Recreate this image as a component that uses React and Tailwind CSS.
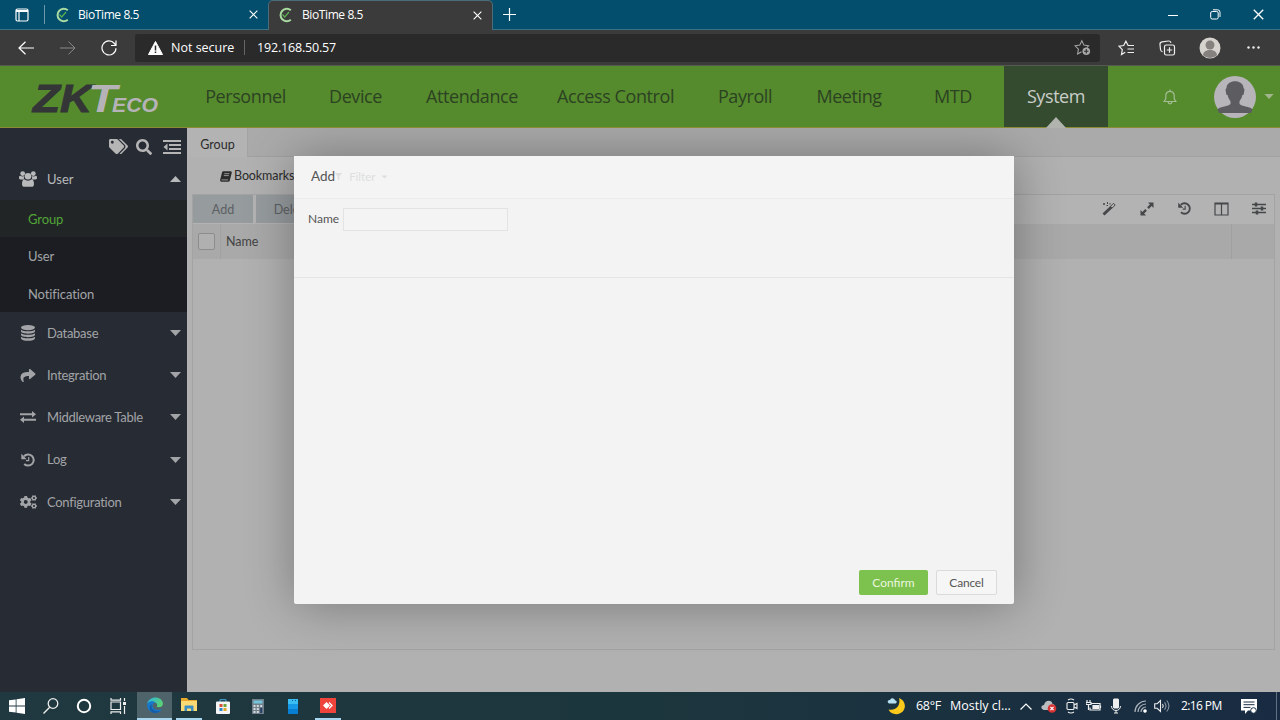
import React from 'react';
import { FaTags, FaSearch, FaShare, FaCogs, FaFilter, FaCaretDown } from 'react-icons/fa';

const navItems = [
  { label: 'Personnel', width: 'w-[117px]' },
  { label: 'Device', width: 'w-[103px]' },
  { label: 'Attendance', width: 'w-[130px]' },
  { label: 'Access Control', width: 'w-[157px]' },
  { label: 'Payroll', width: 'w-[102px]' },
  { label: 'Meeting', width: 'w-[106px]' },
  { label: 'MTD', width: 'w-[102px]' },
];

const ExchangeIcon = () => (
  <svg viewBox="0 0 16 12" className="w-4 h-3" fill="currentColor">
    <path d="M0 2.200h12V0L16 3.200l-4 3.200V4.200H0zM16 7.800H4V5.600L0 8.800 4 12V9.800H16z" />
  </svg>
);

const HistoryIcon = ({ className }) => (
  <svg viewBox="0 0 14 14" className={className} fill="none" stroke="currentColor">
    <path d="M3 3.200A5.600 5.600 0 1 1 3.200 11" strokeWidth="2" />
    <path d="M.3.800v5.400h5.400z" fill="currentColor" stroke="none" />
    <path d="M7.700 4v3.700H5" strokeWidth="1.200" />
  </svg>
);

const DatabaseIcon = () => (
  <svg viewBox="0 0 14 16" className="w-[14px] h-4" fill="currentColor">
    <ellipse cx="7" cy="2.600" rx="7" ry="2.600" />
    <path d="M0 4.700c2.500 2.200 11.500 2.200 14 0v1.600c0 3.200-14 3.200-14 0z" />
    <path d="M0 8.200c2.500 2.200 11.500 2.200 14 0v1.600c0 3.200-14 3.200-14 0z" />
    <path d="M0 11.700c2.500 2.200 11.500 2.200 14 0v1.600c0 3.400-14 3.400-14 0z" />
  </svg>
);

const UsersIcon = () => (
  <svg viewBox="0 0 18 16" className="w-[18px] h-4 ml-[19px]" fill="currentColor">
    <circle cx="3.700" cy="2.600" r="2.400" />
    <circle cx="14.300" cy="2.600" r="2.400" />
    <path d="M5 8.500H1.500C.3 8.500 0 7.700 0 6.800c0-1.500.5-2.400 1.300-2.100 1.200.9 3 1 4 .3-.6 1.300-.4 2.400-.3 3.500zM13 8.500h3.500c1.200 0 1.500-.8 1.500-1.700 0-1.500-.5-2.400-1.300-2.100-1.200.9-3 1-4 .3.600 1.300.4 2.400.3 3.500z" />
    <circle cx="9" cy="5.300" r="3.300" />
    <path d="M5.300 8.300c2 1.800 5.400 1.800 7.400 0 1.600 0 2.300 2.300 2.300 4.900 0 1.700-1 2.600-2.500 2.600h-7C4 15.800 3 14.900 3 13.200c0-2.600.7-4.900 2.300-4.900z" />
  </svg>
);

const OutdentIcon = () => (
  <svg viewBox="0 0 18 14" className="w-[18px] h-[14px]" fill="currentColor">
    <path d="M0 0h18v2H0zM6 4h12v2H6zM6 8h12v2H6zM0 12h18v2H0zM4.500 3.500v7L.5 7z" />
  </svg>
);

const BookIcon = () => (
  <svg viewBox="0 0 12 11" className="w-3 h-[11px] mr-[2px]" fill="currentColor">
    <path d="M3.500.300h6.800c1.100 0 1.700.7 1.400 1.700L9.800 9.500c-.2.800-.7 1.200-1.500 1.200H1.500C.4 10.700-.1 9.800.2 8.800L2 1.500C2.200.700 2.800.300 3.500.300z" />
    <path d="M4.300 2.700h5M3.800 4.600h5M1.500 8.900h6.600" stroke="#b1b1b1" strokeWidth=".8" />
  </svg>
);

const menuItems = [
  { label: 'Database', icon: <DatabaseIcon /> },
  { label: 'Integration', icon: <FaShare className="w-4 h-[15px]" /> },
  { label: 'Middleware Table', icon: <ExchangeIcon /> },
  { label: 'Log', icon: <HistoryIcon className="w-[14px] h-[14px]" /> },
  { label: 'Configuration', icon: <FaCogs className="w-[17px] h-4" /> },
];

const Triangle = ({ up, className }) => (
  <svg viewBox="0 0 11 6" className={className} fill="currentColor">
    <path d={up ? 'M0 6 5.500 0 11 6z' : 'M0 0h11L5.500 6z'} />
  </svg>
);

const BioLogo = () => (
  <svg viewBox="0 0 14 16" className="w-[14px] h-4" fill="none">
    <path d="M12.800 3.300A6.200 6.200 0 1 0 12.800 12.700" stroke="#a9dba0" strokeWidth="2" />
    <path d="M4.500 7.500 6.700 10 11 5" stroke="#5cae52" strokeWidth="1.200" />
  </svg>
);

const CloseIcon = ({ className }) => (
  <svg viewBox="0 0 10 10" className={className} stroke="currentColor" strokeWidth="1.200">
    <path d="M.7.700l8.600 8.600M9.300.700.7 9.300" />
  </svg>
);

const TabStrip = () => (
  <div className="h-[30px] bg-[#034d6d] flex items-stretch text-white text-[12px]">
    <div className="w-[44px] flex items-center justify-center border-b border-[#3a7288]">
      <svg viewBox="0 0 14 14" className="w-[14px] h-[14px]" fill="none" stroke="#fff" strokeWidth="1.200">
        <rect x="1" y="1" width="12" height="12" rx="1.500" />
        <path d="M1 3h12" strokeWidth="2" />
        <path d="M4 3v10" />
      </svg>
    </div>
    <div className="w-[224px] pr-[10px] flex items-center border-b border-[#3a7288]">
      <div className="w-px h-[19px] bg-[#6d98ab] mr-[10px]" />
      <BioLogo />
      <span className="ml-[9px] flex-1 tracking-[-0.4px]">BioTime 8.5</span>
      <CloseIcon className="w-[9px] h-[9px]" />
    </div>
    <div className="w-[225px] pl-[9px] pr-[10px] pb-px flex items-center bg-[#3b3b3b] rounded-t-[5px] border-t border-x border-[#4c6c79]">
      <BioLogo />
      <span className="ml-[10px] flex-1 tracking-[-0.4px]">BioTime 8.5</span>
      <CloseIcon className="w-[9px] h-[9px]" />
    </div>
    <div className="flex-1 pl-[10px] flex items-center border-b border-[#3a7288]">
      <svg viewBox="0 0 13 13" className="w-[13px] h-[13px]" stroke="#fff" strokeWidth="1.200">
        <path d="M6.500 0v13M0 6.500h13" />
      </svg>
      <div className="ml-auto flex items-center mr-[16px]">
        <svg viewBox="0 0 10 10" className="w-[10px] h-[10px] mr-[32px]" stroke="#fff"><path d="M0 5.500h10" /></svg>
        <svg viewBox="0 0 11 11" className="w-[11px] h-[11px] mr-[32px]" fill="none" stroke="#fff">
          <rect x=".7" y="2.500" width="7.500" height="7.500" rx="1.500" />
          <path d="M3 .8h4.500a2.500 2.500 0 0 1 2.500 2.500V8" />
        </svg>
        <CloseIcon className="w-[11px] h-[11px]" />
      </div>
    </div>
  </div>
);

const AddressBar = () => (
  <div className="h-9 bg-[#3b3b3b] border-b border-[#55594f] flex items-center text-white">
    <svg viewBox="0 0 16 14" className="w-4 h-[14px] ml-[18px]" fill="none" stroke="#fff" strokeWidth="1.200">
      <path d="M16 7H1M7.500.700 1 7l6.500 6.300" />
    </svg>
    <svg viewBox="0 0 16 14" className="w-4 h-[14px] ml-[26px]" fill="none" stroke="#8a8a8a" strokeWidth="1">
      <path d="M0 7h15M8.500.700 15 7l-6.500 6.300" />
    </svg>
    <svg viewBox="0 0 16 16" className="w-4 h-4 ml-[25px]" fill="none" stroke="#fff" strokeWidth="1.200">
      <path d="M15 8.200A7 7 0 1 1 13.400 3.500L15 5.300M15 .5v5h-5" />
    </svg>
    <div className="ml-[18px] w-[965px] h-7 bg-[#2a2a2a] rounded-[3px] flex items-center pl-[13px] pr-[9px] text-[12.500px]">
      <svg viewBox="0 0 15 14" className="w-[15px] h-[14px]">
        <path d="M7.500.500 14.500 13.500H.5z" fill="#fff" stroke="#fff" strokeLinejoin="round" />
        <path d="M7.500 4.500v5M7.500 10.500v1.500" stroke="#2a2a2a" strokeWidth="1.500" />
      </svg>
      <span className="ml-[8px] pt-px w-[62px] whitespace-nowrap">Not secure</span>
      <div className="w-px h-[15px] bg-[#666] ml-[11px] mr-[12px]" />
      <span className="flex-1 pt-px tracking-[-0.18px]">192.168.50.57</span>
      <svg viewBox="0 0 18 17" className="w-[17px] h-[17px]" fill="none" stroke="#aaa" strokeWidth="1.100">
        <path d="M8 13 3.800 15.400 4.700 10.300 1 6.700 6.100 6 8.300 1.300 10.500 6 15.500 6.700 13.500 8.700" />
        <circle cx="13" cy="12.500" r="4" fill="#aaa" stroke="none" />
        <path d="M13 10.200v4.600M10.700 12.500h4.600" stroke="#2a2a2a" />
      </svg>
    </div>
    <svg viewBox="0 0 17 16" className="w-[17px] h-4 ml-[18px]" fill="none" stroke="#eee" strokeWidth="1.200">
      <path d="M7.200 12.300 3.500 14.500 4.300 9.700 1 6.200 5.700 5.500 7.900 1.200 10.100 5.500H16M9.500 9H16M9.500 12.500H16" />
    </svg>
    <svg viewBox="0 0 17 16" className="w-[17px] h-4 ml-[24px]" fill="none" stroke="#eee" strokeWidth="1.200">
      <rect x="5.500" y="5" width="10" height="10" rx="1.800" />
      <path d="M10.500 7.300v5.400M7.800 10h5.400M3.500 11.800A3 3 0 0 1 1.500 9.500L1 4.500A2.500 2.500 0 0 1 3 1.800L9.500 1A2.500 2.500 0 0 1 12 2.800" />
    </svg>
    <svg viewBox="0 0 22 22" className="w-[22px] h-[22px] ml-[23px]">
      <circle cx="11" cy="11" r="10.500" fill="#d6d3cf" />
      <circle cx="11" cy="8" r="4.500" fill="#85817e" />
      <path d="M4 18.300c0-7 14-7 14 0a10.500 10.500 0 0 1-14 0z" fill="#85817e" />
    </svg>
    <svg viewBox="0 0 13 3" className="w-[13px] h-[3px] ml-[26px]" fill="#eee">
      <circle cx="1.500" cy="1.500" r="1.200" /><circle cx="6.500" cy="1.500" r="1.200" /><circle cx="11.500" cy="1.500" r="1.200" />
    </svg>
  </div>
);

// "ZKTeco" wordmark, slanted text with a smaller tail
const ZkLogo = () => (
  <div className="w-[187px] pl-[27px] flex items-center">
    <svg viewBox="-5 0 140 56" className="w-[140px] h-[56px]" fontFamily="Liberation Sans, sans-serif" fontWeight="700" fontStyle="italic">
      <text x="1" y="43" fontSize="39" textLength="59" lengthAdjust="spacingAndGlyphs" fill="#343536" stroke="#343536">ZK</text>
      <text x="56" y="43" fontSize="39" textLength="29" lengthAdjust="spacingAndGlyphs" fill="#b5b3b8">T</text>
      <text x="80" y="43" fontSize="20" textLength="46" lengthAdjust="spacingAndGlyphs" fill="#b5b3b8">ECO</text>
    </svg>
  </div>
);

const Header = () => (
  <header className="h-[62px] bg-[#558b2d] border-b border-[#8b8a35] flex items-stretch text-[#2c4222]">
    <ZkLogo />
    {navItems.map((item) => (
      <div key={item.label} className={`${item.width} flex items-center justify-center whitespace-nowrap text-[18px] tracking-[-0.42px]`}>
        {item.label}
      </div>
    ))}
    <div className="relative w-[104px] bg-[#354b30] flex items-center justify-center text-[18px] tracking-[-0.42px] text-[#c9cec9]">
      System
      <Triangle up className="absolute -bottom-px left-[41px] w-[22px] h-[11px] text-[#b0b3ae]" />
    </div>
    <div className="flex items-center">
      <svg viewBox="0 0 14 16" className="w-[14px] h-4 ml-[55px]" fill="none" stroke="#a5bd94" strokeWidth="1.200">
        <path d="M1 12.500h12l-1.800-2.700V6.500a4.200 4.200 0 0 0-8.400 0v3.300zM7 .5v1.800M5.200 13a1.800 1.800 0 0 0 3.600 0" />
      </svg>
      <svg viewBox="0 0 42 42" className="w-[42px] h-[42px] ml-[37px]">
        <circle cx="21" cy="21" r="21" fill="#b7b5b9" />
        <path d="M12.500 12C12.500 3 29.500 3 29.500 12l1 1.500-.8 5-1.400.8c-.5 3-1.800 4.500-2.800 6V28c2 2.500 10 2 13 5.500L37 37H5l-1.500-3.500C6.500 30 14.500 30.500 16.500 28v-2.700c-1-1.500-2.300-3-2.800-6l-1.400-.8-.8-5z" fill="#5d5c61" />
      </svg>
      <Triangle className="w-[10px] h-[5px] ml-[8px] text-[#a2b58d]" />
    </div>
  </header>
);

const Sidebar = () => (
  <aside className="w-[187px] bg-[#272b33] text-[#a2a4a7] text-[13px] tracking-[-0.28px] font-[Lato,sans-serif]">
    <div className="h-[30px] pt-[7px] pr-[6px] flex items-center justify-end text-[#b5b5b6]">
      <FaTags className="w-[19px] h-[17px] mr-[8px]" />
      <FaSearch className="w-4 h-4 mr-[11px]" />
      <OutdentIcon />
    </div>
    <div className="h-[42px] flex items-center text-[#b8b9bb]">
      <UsersIcon />
      <span className="ml-[10px] pt-px flex-1 tracking-normal">User</span>
      <Triangle up className="w-[11px] h-[6px] mr-[6px]" />
    </div>
    <div className="h-[112px] bg-[#1b1d23] tracking-[-0.1px]">
      <div className="h-[37px] pl-7 pt-[2px] flex items-center bg-[#212526] text-[#51a536]">Group</div>
      <div className="h-[38px] pl-7 pt-[2px] flex items-center">User</div>
      <div className="h-[37px] pl-7 pt-[2px] flex items-center">Notification</div>
    </div>
    {menuItems.map((item) => (
      <div key={item.label} className="h-[42.200px] flex items-center">
        <div className="w-[18px] ml-[19px] flex justify-center">{item.icon}</div>
        <span className="ml-[10px] pt-px flex-1">{item.label}</span>
        <Triangle className="w-[11px] h-[6px] mr-[6px]" />
      </div>
    ))}
  </aside>
);

const TableTools = () => (
  <div className="ml-auto flex items-center pr-[8px] pb-[2px] text-[#454749]">
    <svg viewBox="0 0 14 14" className="w-[14px] h-[14px] mr-[24px]" fill="none" stroke="currentColor">
      <path d="M1.500 12.500 9.500 5" strokeWidth="3" />
      <path d="M8.300 4.500 11.500 1.300 13.200 3 10 6.200z" />
      <path d="M2 1v2M1 2h2M5.500 0v2M4.500 3.500h1.500M8 1v1.500" />
    </svg>
    <svg viewBox="0 0 14 14" className="w-[14px] h-[14px] mr-[24px]" fill="currentColor">
      <path d="M8 .5h5.500V6l-1.900-1.900L8.800 6.900 7.100 5.200 9.900 2.400zM6 13.500H.5V8l1.900 1.900 2.800-2.800 1.700 1.700-2.800 2.800z" />
    </svg>
    <HistoryIcon className="w-[13px] h-[13px] mr-[23px]" />
    <svg viewBox="0 0 15 14" className="w-[15px] h-[14px] mr-[23px]" fill="none" stroke="currentColor" strokeWidth="1.200">
      <path d="M1 1h13v12H1zM1 2h13M7.500 2v11" />
    </svg>
    <svg viewBox="0 0 14 13" className="w-[14px] h-[13px]" stroke="currentColor" strokeWidth="1.300">
      <path d="M0 2.500h14M0 6.500h14M0 10.500h14" />
      <path d="M4 .5v4M10 4.500v4M5 8.500v4" strokeWidth="2.500" />
    </svg>
  </div>
);

const AddDialog = () => (
  <div className="absolute left-[106px] top-[27.500px] w-[720px] h-[448px] bg-[#f3f3f3] rounded-[2px] shadow-[1px_1px_50px_rgba(0,0,0,0.32)] flex flex-col font-[Lato,sans-serif] text-[#555]">
    <div className="h-[43px] border-b border-[#ebebeb] bg-[#f4f4f4] px-[17px] flex items-center text-[13.500px]">
      Add
      <span className="flex items-center text-[11.500px] text-[#dedede]">
        <FaFilter className="w-[7px] h-[9px]" />
        <span className="ml-[7px]">Filter</span>
        <FaCaretDown className="w-[9px] h-[9px] ml-[5px]" />
      </span>
    </div>
    <div className="h-[79px] border-b border-[#e5e5e5] pl-[14px] pt-[9px] flex items-start">
      <label className="w-[35px] h-[23px] flex items-center text-[12px]">Name</label>
      <input type="text" className="w-[165px] h-[23px] border border-[#e3e3e3] bg-[#f4f4f4]" />
    </div>
    <div className="flex-1" />
    <div className="h-[34px] pr-[17px] flex justify-end gap-2 text-[12px]">
      <button className="w-[69px] h-[25px] pt-[1px] bg-[#7dc14f] text-[#eaf6df] rounded-[2px]">Confirm</button>
      <button className="w-[61px] h-[25px] pt-[1px] tracking-[-0.2px] border border-[#dadada] bg-[#f6f6f6] rounded-[2px]">Cancel</button>
    </div>
  </div>
);

const Content = () => (
  <main className="relative flex-1 overflow-hidden bg-[#b1b1b1] border-l border-[#b2b2b7] flex flex-col text-[#2b2b2b] text-[12.500px] font-[Lato,sans-serif]">
    <div className="h-[29px] bg-[#aaaaaa] border-b border-[#a1a1a1] flex">
      <div className="w-[60px] h-[29px] pt-[6px] bg-[#b3b3b3] border-r border-[#a3a3a3] flex items-center justify-center">
        Group
      </div>
    </div>
    <div className="h-[37px] pl-[32px] pt-[2px] flex items-center">
      <BookIcon />
      <span className="tracking-[-0.1px]">Bookmarks</span>
      <FaCaretDown className="w-2 h-2 ml-[4px] text-[#777]" />
    </div>
    <div className="ml-[4px] mr-[5px] h-[456px] border border-[#a3a3a3]">
      <div className="h-[29px] flex bg-[#b3b3b3] text-[#5c6063]">
        <div className="w-[60px] h-[28px] pt-[2px] bg-[#969b9e] flex items-center justify-center">Add</div>
        <div className="w-[72px] h-[28px] pt-[2px] ml-[3px] bg-[#969b9e] flex items-center justify-center">Delete</div>
        <TableTools />
      </div>
      <div className="h-[35px] bg-[#a9a9a9] flex items-center text-[#434343]">
        <div className="w-[28px] h-full border-r border-[#a1a1a1] flex items-center justify-center">
          <div className="w-[17px] h-[17px] border border-[#8c8c8c] bg-[#b0b0b0] rounded-[2px]" />
        </div>
        <span className="pl-[5px] pt-[2px] flex-1">Name</span>
        <div className="w-[43px] h-full border-l border-[#a0a0a0]" />
      </div>
    </div>
    <AddDialog />
  </main>
);

const WindowsLogo = () => (
  <svg viewBox="0 0 16 16" className="w-4 h-4" fill="#fff">
    <path d="M0 2.300 6.700 1.400v6.200H0zM7.500 1.300 16 0v7.600H7.500zM0 8.400h6.700v6.200L0 13.700zM7.500 8.400H16V16l-8.500-1.200z" />
  </svg>
);

const EdgeLogo = () => (
  <svg viewBox="0 0 16 16" className="w-4 h-4">
    <defs>
      <linearGradient id="edgeTop" x1="0" y1="0" x2="1" y2=".4">
        <stop offset="0" stopColor="#2bb3e6" />
        <stop offset="1" stopColor="#59d178" />
      </linearGradient>
    </defs>
    <path d="M.2 7C1.500-2 15.500-1.500 15.900 6.500c.2 3.500-4 4.500-6.300 3.300 1.400-2 .3-4.300-2.800-4.500C3.500 5 1 6 .2 7z" fill="url(#edgeTop)" />
    <path d="M.1 8C.5 4 6 3.300 8.500 5.600 5 6 4.500 10.500 8 12.300c2.500 1.200 5 .8 6.900-.4A8 8 0 0 1 .1 8z" fill="#1778cb" />
    <path d="M5 7c-2 4.500 2.500 8.500 8.700 6.500A8 8 0 0 1 5 15.300C1.500 12 2.500 8.500 5 7z" fill="#155ba6" />
  </svg>
);

const Taskbar = () => (
  <footer className="h-7 bg-linear-to-r from-[#20383f] via-[#1c363d] to-[#182b42] flex items-stretch text-white">
    <div className="w-[137px] flex items-center">
      <div className="ml-[9px]"><WindowsLogo /></div>
      <svg viewBox="0 0 16 16" className="w-4 h-4 ml-[18px]" fill="none" stroke="#eee" strokeWidth="1.300">
        <circle cx="10" cy="5.500" r="4.800" /><path d="M6.700 9.300.5 15.500" />
      </svg>
      <svg viewBox="0 0 16 16" className="w-4 h-4 ml-[17px]" fill="none" stroke="#fff" strokeWidth="2"><circle cx="8" cy="8" r="6.200" /></svg>
      <svg viewBox="0 0 16 16" className="w-4 h-4 ml-[18px]" fill="none" stroke="#eee" strokeWidth="1.200">
        <path d="M1 4h9.500v7.500H1zM1 0v2.200h9.500V0M1 16v-2.200h9.500V16M14.500 0v3M14.500 8v8" />
        <path d="M13 4h3v3h-3z" fill="#eee" stroke="none" />
      </svg>
    </div>
    <div className="w-[35px] bg-[#4e636a] border-b-2 border-[#a7d6ee] flex items-center justify-center pl-px"><EdgeLogo /></div>
    <div className="w-[26px] ml-[4px] border-b-2 border-[#a7d6ee] flex items-center justify-center">
      <svg viewBox="0 0 16 14" className="w-4 h-[14px]">
        <path d="M0 0h6l1.500 2H16v11H0z" fill="#e8a92c" />
        <path d="M0 3h16v10H0z" fill="#fbd975" />
        <path d="M3.500 13V8.500a1 1 0 0 1 1-1h7a1 1 0 0 1 1 1V13H10v-2.500H6V13z" fill="#3b8fc4" />
      </svg>
    </div>
    <div className="w-[114px] flex items-center">
      <svg viewBox="0 0 14 15" className="w-[14px] h-[15px] ml-[14px]">
        <path d="M4 3V.700h6V3" fill="none" stroke="#49a8de" />
        <rect x="0" y="2.500" width="14" height="12.500" rx="1" fill="#f4f5f6" />
        <path d="M3.500 5h3v3h-3z" fill="#d94e35" /><path d="M7.500 5h3v3h-3z" fill="#6da63a" />
        <path d="M3.500 9h3v3h-3z" fill="#2a86c7" /><path d="M7.500 9h3v3h-3z" fill="#e5a529" />
      </svg>
      <svg viewBox="0 0 12 15" className="w-3 h-[15px] ml-[22px]">
        <path d="M0 0h12v15H0z" fill="#707f89" /><path d="M1.500 1.500h9v3h-9z" fill="#73c4d9" />
        <path d="M1.500 6h2v2h-2zM4.800 6h2v2h-2zM8.200 6h2v2h-2zM1.500 9h2v2h-2zM4.800 9h2v2h-2zM1.500 12h2v2h-2zM4.800 12h2v2h-2z" fill="#d4dadd" />
        <path d="M8.200 9h2v5h-2z" fill="#263e68" />
      </svg>
      <svg viewBox="0 0 10 15" className="w-[10px] h-[15px] ml-[24px]">
        <path d="M0 0h10v15H0z" fill="#087ed2" /><path d="M0 0h10v10H0z" fill="#1599e6" /><path d="M0 0h10v5H0z" fill="#39bdf3" />
        <path d="M4 1h1v1H4zM7 1h1v1H7z" fill="#075b91" />
      </svg>
    </div>
    <div className="w-[26px] -ml-px border-b-2 border-[#a7d6ee] flex items-center justify-center">
      <svg viewBox="0 0 16 15" className="w-4 h-[15px]">
        <path d="M0 0h16v15H0z" fill="#ef443b" /><path d="M6.500 4 10 7.500 6.500 11 3 7.500z" fill="#fff" />
        <path d="M9 4.500 12 7.500 9 10.500" fill="none" stroke="#fff" strokeWidth="1.300" />
      </svg>
    </div>
    <div className="ml-auto flex items-center text-[12.500px]">
      <svg viewBox="0 0 19 18" className="w-[19px] h-[18px]">
        <path d="M12 1c8 3 8 14-1 16-4 .8-8-1-9.500-4.500C9 14.500 14 8 12 1z" fill="#fbc91c" />
        <path d="M2 6.500C-.5 5 1 2.500 3 3c1-3 5-2 5 .500 2.500 0 2 3 0 3z" fill="#b7dff2" />
      </svg>
      <span className="ml-[10px] pt-px w-[26px] whitespace-nowrap tracking-[-0.3px]">68°F</span>
      <span className="ml-[8px] pt-px w-[62px] whitespace-nowrap">Mostly cl...</span>
      <svg viewBox="0 0 12 7" className="w-3 h-[7px] ml-[8px]" fill="none" stroke="#fff" strokeWidth="1.200"><path d="M.5 6.500 6 1l5.500 5.500" /></svg>
      <svg viewBox="0 0 16 13" className="w-4 h-[13px] ml-[9px]">
        <path d="M3 10C-1 9 0 5 3 5 4-.5 11-.5 11.500 4 15 4 15 10 12 10z" fill="#b9bdc0" />
        <circle cx="11" cy="8.500" r="4.300" fill="#d83234" /><path d="m9.400 6.900 3.200 3.200m0-3.200L9.400 10.100" stroke="#fff" strokeWidth="1.200" />
      </svg>
      <svg viewBox="0 0 12 16" className="w-3 h-4 ml-[9px]" fill="none" stroke="#eee" strokeWidth="1.100">
        <rect x="1" y="4.500" width="7" height="7" rx="1" /><path d="M8 7l3-1.500v5L8 9M2 2Q5 0 8 2M2 14q3 2 6 0" />
      </svg>
      <svg viewBox="0 0 16 12" className="w-4 h-3 ml-[8px]" fill="none" stroke="#eee" strokeWidth="1.200">
        <path d="M5 3.500h9V10H4V7.500M14.500 5.500v2.500" /><path d="M7 5.500h5.500v3H7z" fill="#eee" /><path d="M1 0v2.500M4 0v2.500M0 2.500h5v2H0zM2.500 4.500V10" />
      </svg>
      <svg viewBox="0 0 12 16" className="w-3 h-4 ml-[8px]" fill="none" stroke="#eee">
        <rect x="3.500" y="1" width="5" height="9" rx=".5" fill="#eee" /><path d="M1.500 8c0 6 9 6 9 0M6 12.500V15M4 15h4" />
      </svg>
      <svg viewBox="0 0 13 13" className="w-[13px] h-[13px] ml-[12px]" fill="none" stroke="#aab2ba" strokeWidth="1.200">
        <path d="M1 12A11 11 0 0 1 12 1M4 12A8 8 0 0 1 12 4M7 12a5 5 0 0 1 5-5" /><circle cx="11" cy="11" r="1.200" fill="#fff" stroke="#fff" />
      </svg>
      <svg viewBox="0 0 16 14" className="w-4 h-[14px] ml-[7px]" fill="none" stroke="#eee" strokeWidth="1.100">
        <path d="M.7 4.700h2.500L6.500 1.500v11L3.200 9.300H.7zM8.500 5q1.500 2 0 4" /><path d="M10.500 3.300q3 3.700 0 7.400M12.700 1.500q4.500 5.500 0 11" stroke="#8995a2" />
      </svg>
      <span className="ml-[11px] w-[41px] whitespace-nowrap text-[12px] tracking-[-0.6px]">2:16 PM</span>
      <svg viewBox="0 0 16 15" className="w-4 h-[15px] ml-[19px]">
        <path d="M0 0h16v11.500h-9L4 15v-3.500H0z" fill="#fff" />
        <path d="M2.500 3h11M2.500 5.700h11M2.500 8.400h7" stroke="#1a2e43" />
        <circle cx="12.500" cy="11.500" r="2.800" fill="#fff" stroke="#1a2e43" />
      </svg>
      <div className="w-px h-7 bg-[#60717f] ml-[19px] mr-[3px]" />
    </div>
  </footer>
);

export default function App() {
  return (
    <div className="w-[1280px] h-[720px] overflow-hidden flex flex-col font-['Open_Sans','Noto_Sans',sans-serif]">
      <TabStrip />
      <AddressBar />
      <Header />
      <div className="flex-1 min-h-0 flex">
        <Sidebar />
        <Content />
      </div>
      <Taskbar />
    </div>
  );
}
